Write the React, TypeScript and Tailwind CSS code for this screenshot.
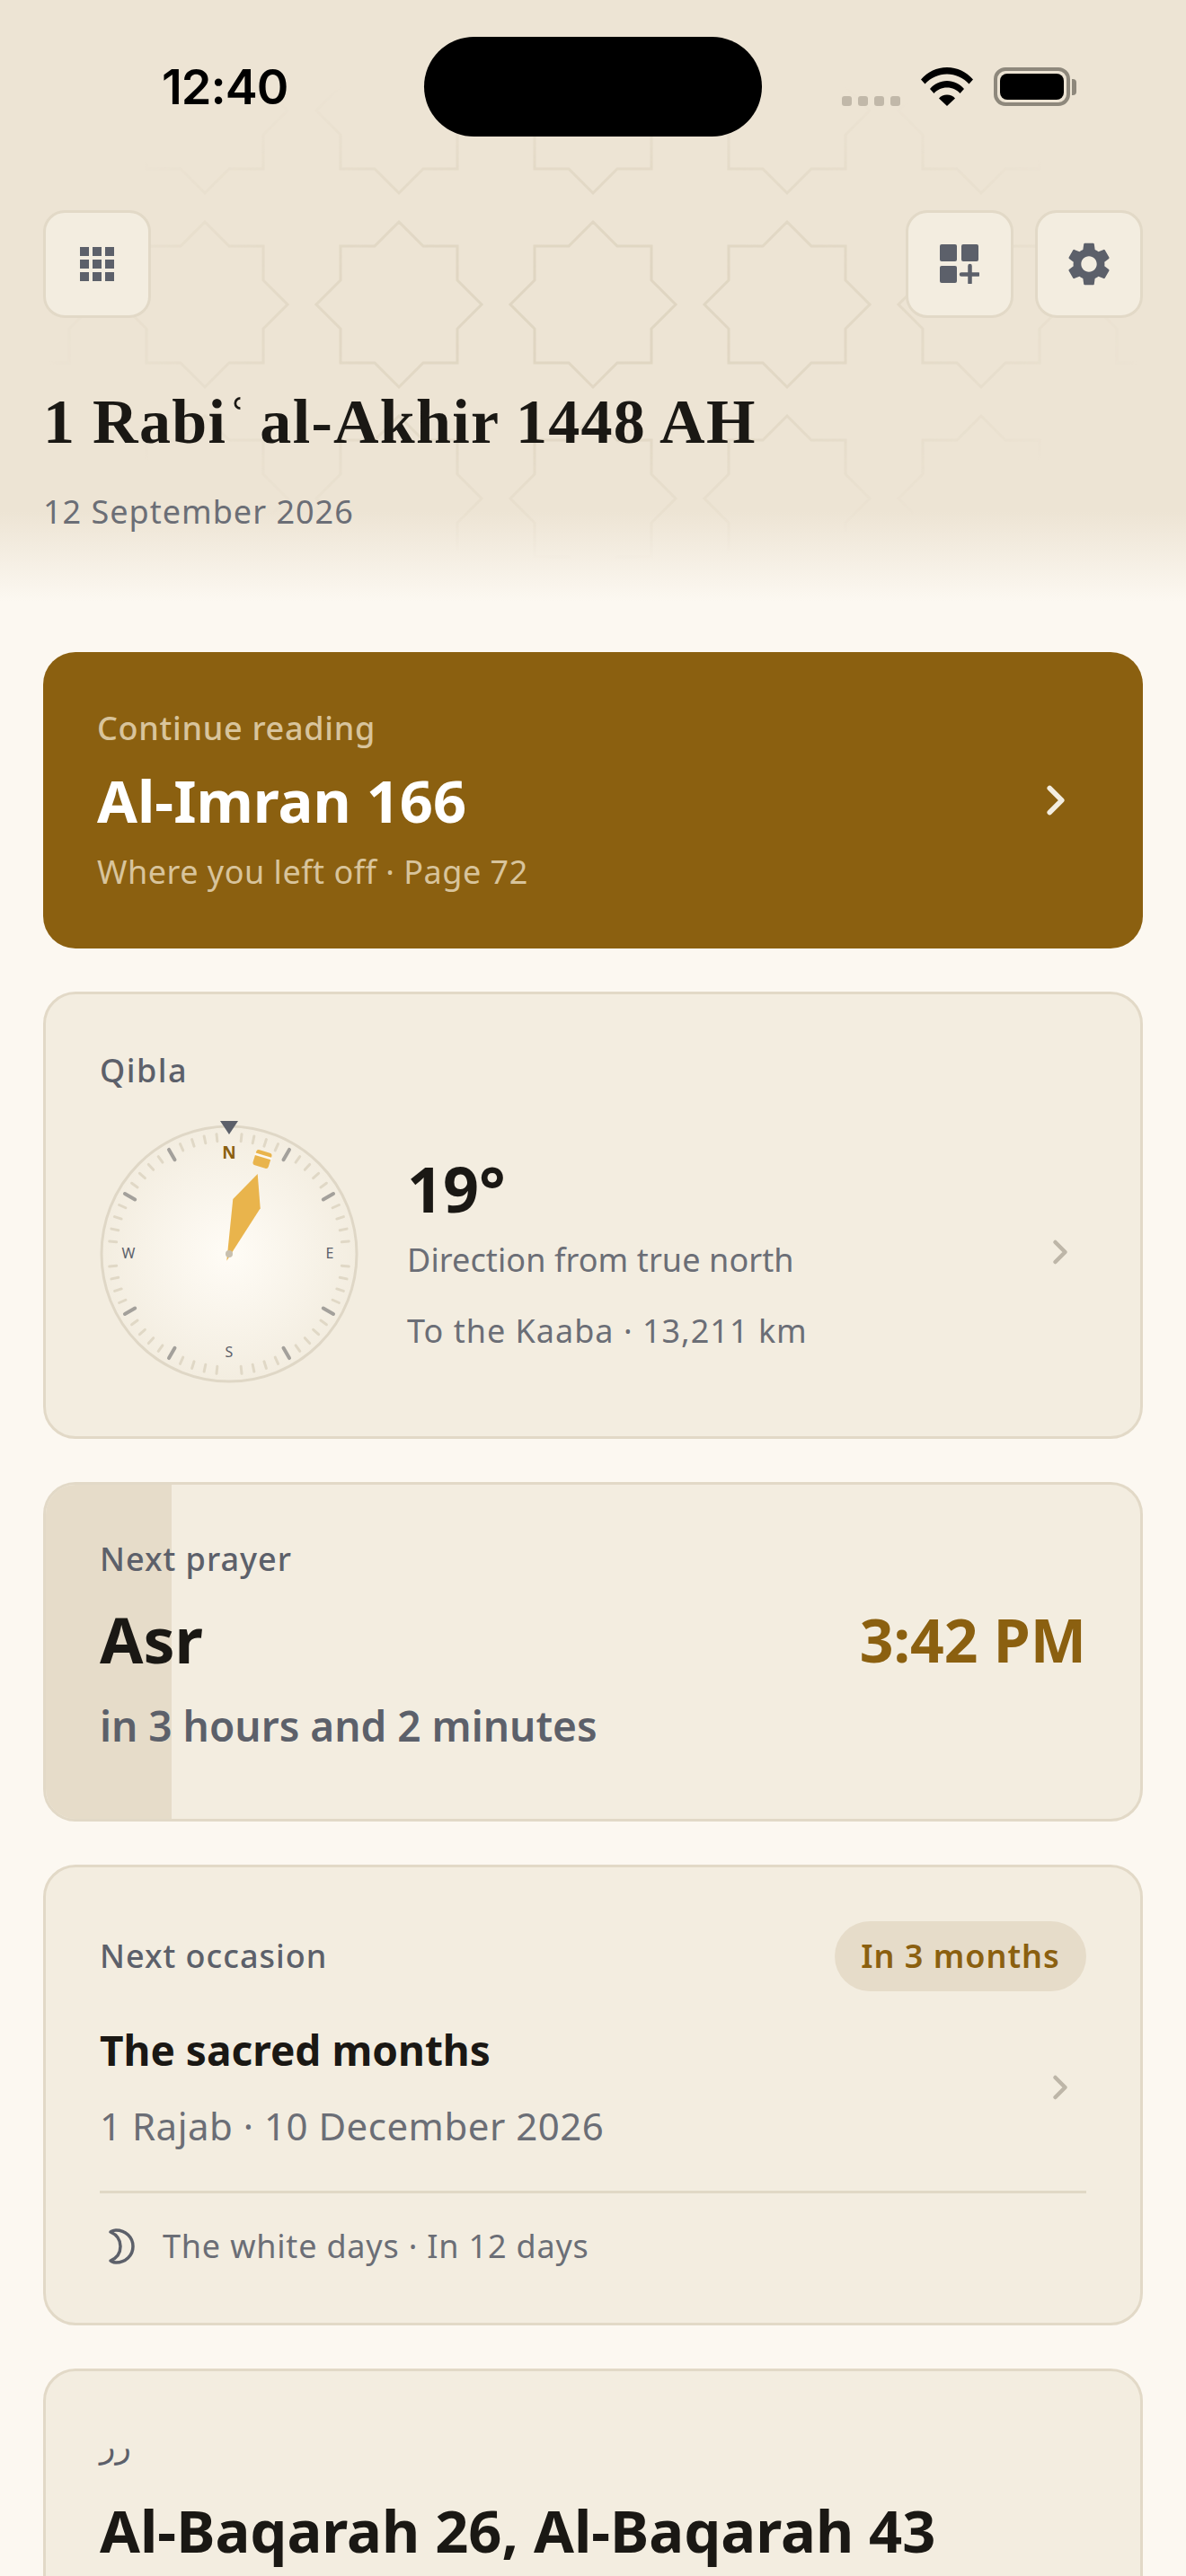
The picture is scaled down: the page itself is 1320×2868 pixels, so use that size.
import React from 'react';
import { ChevronRight } from 'lucide-react';
import { MdSettings } from 'react-icons/md';

const STAR_XS = [12, 228, 444, 660, 876, 1092, 1308];
const STAR_YS = [123, 339, 555];

const starPoints = (cx: number, cy: number) => {
  const r = 92;
  const s = 65;
  const n = 27;
  return [
    [0, -r], [n, -s], [s, -s], [s, -n], [r, 0], [s, n], [s, s], [n, s],
    [0, r], [-n, s], [-s, s], [-s, n], [-r, 0], [-s, -n], [-s, -s], [-n, -s],
  ].map(([x, y]) => `${cx + x},${cy + y}`).join(' ');
};

const HeaderPattern = () => (
  <svg className="absolute left-0 top-0" width="1320" height="670" viewBox="0 0 1320 670" fill="none">
    <defs>
      <radialGradient id="starFade" gradientUnits="userSpaceOnUse" cx="660" cy="345" r="620" gradientTransform="translate(0 190) scale(1 0.45)">
        <stop offset="0" stopColor="#fff" stopOpacity="1" />
        <stop offset="0.5" stopColor="#fff" stopOpacity="0.75" />
        <stop offset="1" stopColor="#fff" stopOpacity="0" />
      </radialGradient>
      <mask id="starMask">
        <rect width="1320" height="670" fill="url(#starFade)" />
      </mask>
    </defs>
    <g mask="url(#starMask)" stroke="#ded4c0" strokeWidth="3">
      {STAR_YS.map((y) =>
        STAR_XS.map((x) => <polygon key={`${x}-${y}`} points={starPoints(x, y)} />)
      )}
    </g>
  </svg>
);

const StatusBar = () => (
  <div className="relative flex h-[111px] items-center pl-[180px] pr-[122px]">
    <span className="w-[292px] pt-[1px] text-[54px] font-semibold leading-none tracking-[-1px] text-black [font-family:Inter,sans-serif]">12:40</span>
    <div className="h-[111px] w-[376px] rounded-[56px] bg-black" />
    <div className="ml-[89px] flex h-[111px] items-end gap-[7px] self-start pb-[34px] pt-[34px]">
      <span className="h-[11px] w-[11px] rounded-[3px] bg-[#c1b8a9]" />
      <span className="h-[11px] w-[11px] rounded-[3px] bg-[#c1b8a9]" />
      <span className="h-[11px] w-[11px] rounded-[3px] bg-[#c1b8a9]" />
      <span className="h-[11px] w-[11px] rounded-[3px] bg-[#c1b8a9]" />
    </div>
    <svg className="ml-[23px]" width="58" height="43" viewBox="0 0 58 43" fill="black">
      <path d="M0 13.500C7.500 5 17.500 0 29 0s21.500 5 29 13.500L53.500 18.500C47 11.500 38.500 7.500 29 7.500S11 11.500 4.500 18.500Z" />
      <path d="M10 24C14.500 18.500 21.500 15 29 15s14.500 3.500 19 9L43.500 29C40 25 35 22.500 29 22.500S18 25 14.500 29Z" />
      <path d="M20 34.500C22 32 25.500 30.500 29 30.500s7 1.500 9 4L29 43Z" />
    </svg>
    <div className="relative ml-[23px] h-[43px] w-[85px] rounded-[13px] border-[4px] border-[#8e887c] p-[3px]">
      <div className="h-full w-full rounded-[8px] bg-black" />
      <div className="absolute -right-[11px] top-[9px] h-[18px] w-[5px] rounded-r-[4px] bg-[#8e887c]" />
    </div>
  </div>
);

const IconButton = ({ children }: { children: React.ReactNode }) => (
  <button className="flex h-[120px] w-[120px] items-center justify-center rounded-[24px] border-[3px] border-[#e2d9c7] bg-[#f3ede0]">
    {children}
  </button>
);

const Header = () => (
  <div className="relative h-[670px] bg-[linear-gradient(to_bottom,#ede4d4_0%,#ede4d4_85%,#fcf8f1_100%)]">
    <HeaderPattern />
    <div className="relative pt-[41px]">
      <StatusBar />
      <div className="mt-[82px] flex items-center justify-between px-[48px]">
        <IconButton>
          <div className="grid grid-cols-3 gap-[4px]">
            {Array.from({ length: 9 }).map((_, i) => (
              <span key={i} className="h-[10px] w-[10px] bg-[#5c606a]" />
            ))}
          </div>
        </IconButton>
        <div className="flex gap-[24px]">
          <IconButton>
            <svg width="44" height="44" viewBox="0 0 44 44" fill="#5c606a">
              <rect x="0" y="0" width="19" height="19" rx="2" />
              <rect x="24" y="0" width="19" height="19" rx="2" />
              <rect x="0" y="24" width="19" height="19" rx="2" />
              <path d="M33.500 24v19M24 33.500h19" stroke="#5c606a" strokeWidth="4.500" strokeLinecap="round" />
            </svg>
          </IconButton>
          <IconButton>
            <MdSettings size={58} color="#5c606a" />
          </IconButton>
        </div>
      </div>
      <h1 className="mt-[76px] px-[48px] text-[70px] font-bold leading-[80px] tracking-[1.300px] text-[#1a1814] [font-family:'Liberation_Serif',serif]">
        1 Rabi<span className="tracking-[-5px]">ʿ</span> al-Akhir 1448 AH
      </h1>
      <p className="mt-[37px] px-[48px] text-[36px] leading-[46px] tracking-[1px] text-[#6b6e76]">
        12 September 2026
      </p>
    </div>
  </div>
);

const Card = ({ children, className = '' }: { children: React.ReactNode; className?: string }) => (
  <div className={`relative overflow-hidden rounded-[36px] border-[3px] border-[#e2d9c7] bg-[#f3ede0] ${className}`}>
    {children}
  </div>
);

const Compass = () => {
  const ticks = Array.from({ length: 60 }, (_, i) => i * 6).filter((a) => a % 90 !== 0);
  return (
    <svg width="296" height="310" viewBox="-148 -152 296 310" className="shrink-0">
      <defs>
        <radialGradient id="dial">
          <stop offset="0" stopColor="#fffcf6" />
          <stop offset="1" stopColor="#f3ede0" />
        </radialGradient>
      </defs>
      <circle r="142" fill="url(#dial)" stroke="#dfd7c6" strokeWidth="3" />
      {ticks.map((a) => {
        const major = a % 30 === 0;
        return (
          <line
            key={a}
            x1="0"
            x2="0"
            y1={major ? -121 : -126}
            y2="-134"
            transform={`rotate(${a})`}
            stroke={major ? '#a3a09b' : '#e0d8c6'}
            strokeWidth={major ? 4 : 3}
            strokeLinecap="round"
          />
        );
      })}
      <polygon points="-10,-148 10,-148 0,-133" fill="#5c606a" />
      <text x="0" y="-106" textAnchor="middle" fontSize="19" fontWeight="700" fill="#8b6010" fontFamily="Noto Sans, sans-serif">N</text>
      <text x="112" y="5" textAnchor="middle" fontSize="16" fill="#5c606a" fontFamily="Noto Sans, sans-serif">E</text>
      <text x="-112" y="5" textAnchor="middle" fontSize="16" fill="#5c606a" fontFamily="Noto Sans, sans-serif">W</text>
      <text x="0" y="115" textAnchor="middle" fontSize="16" fill="#5c606a" fontFamily="Noto Sans, sans-serif">S</text>
      <polygon points="31.700,-89 34.700,-50.700 -2.700,7.700 4.300,-61" fill="#e9b44c" />
      <circle r="4" fill="#c8bfae" />
      <g transform="translate(37 -105.500) rotate(17)">
        <rect x="-9" y="-9" width="18" height="18" rx="3" fill="#e9b44c" />
        <rect x="-10" y="-4.500" width="20" height="2.500" fill="#fcf8f1" />
      </g>
    </svg>
  );
};

export default function App() {
  return (
    <div className="h-[2868px] w-[1320px] overflow-hidden bg-[#fcf8f1] [font-family:'Noto_Sans',sans-serif]">
      <Header />
      <div className="flex flex-col gap-[48px] px-[48px] pt-[56px]">
        {/* Continue reading */}
        <div className="flex h-[330px] items-center justify-between rounded-[36px] bg-[#8b6010] pl-[60px] pr-[70px]">
          <div>
            <div className="text-[36px] font-medium leading-[46px] tracking-[0.700px] text-[#d8c49c]">Continue reading</div>
            <div className="mt-[17px] text-[65px] font-bold leading-[80px] text-white">Al-Imran 166</div>
            <div className="mt-[17px] text-[36px] leading-[46px] tracking-[0.500px] text-[#d8c49c]">Where you left off · Page 72</div>
          </div>
          <ChevronRight size={54} strokeWidth={2.500} color="#f3ede0" />
        </div>

        {/* Qibla */}
        <Card className="h-[498px] pl-[60px] pr-[67px] pt-[62px]">
          <div className="text-[36px] font-medium leading-[46px] tracking-[1.500px] text-[#5c606a]">Qibla</div>
          <div className="mt-[29px] flex items-start">
            <div className="-ml-[4px]">
              <Compass />
            </div>
            <div className="ml-[50px] flex-1 pt-[39px]">
              <div className="text-[70px] font-bold leading-[80px] text-[#1a1814]">19°</div>
              <div className="mt-[17px] text-[36px] leading-[46px] tracking-[0.100px] text-[#6b6e76]">Direction from true north</div>
              <div className="mt-[33px] text-[36px] leading-[46px] tracking-[1px] text-[#6b6e76]">To the Kaaba · 13,211 km</div>
            </div>
            <div className="mt-[128px]">
              <ChevronRight size={44} strokeWidth={2.500} color="#bdb6a8" />
            </div>
          </div>
        </Card>

        {/* Next prayer */}
        <Card className="h-[378px] px-[60px] pt-[60px]">
          <div className="absolute bottom-0 left-0 top-0 w-[140px] bg-[#e6dcc9]" />
          <div className="relative">
            <div className="text-[36px] font-medium leading-[46px] tracking-[1px] text-[#5c606a]">Next prayer</div>
            <div className="mt-[23px] flex items-center justify-between">
              <span className="text-[70px] font-bold leading-[86px] text-[#1a1814]">Asr</span>
              <span className="text-[66px] font-bold leading-[86px] text-[#8b6010]">3:42 PM</span>
            </div>
            <div className="mt-[23px] text-[46px] font-semibold leading-[60px] text-[#5c606a]">in 3 hours and 2 minutes</div>
          </div>
        </Card>

        {/* Next occasion */}
        <Card className="h-[513px] px-[60px] pt-[60px]">
          <div className="flex items-center justify-between">
            <span className="text-[36px] font-medium leading-[46px] tracking-[1px] text-[#5c606a]">Next occasion</span>
            <span className="flex h-[78px] w-[280px] items-center justify-center rounded-full bg-[#e6dcc9] text-[36px] font-semibold tracking-[1px] text-[#8b6010]">In 3 months</span>
          </div>
          <div className="mt-[35px] flex items-center justify-between pr-[7px]">
            <div>
              <div className="text-[46px] font-bold leading-[60px] text-[#1a1814]">The sacred months</div>
              <div className="mt-[27px] text-[42px] leading-[56px] tracking-[0.500px] text-[#6b6e76]">1 Rajab · 10 December 2026</div>
            </div>
            <ChevronRight size={44} strokeWidth={2.500} color="#bdb6a8" />
          </div>
          <div className="mt-[44px] h-[3px] bg-[#e0d8c6]" />
          <div className="ml-[9px] mt-[36px] flex items-center gap-[29px]">
            <svg width="32" height="40" viewBox="0 0 32 40" fill="none" stroke="#5c606a" strokeWidth="3.500" strokeLinejoin="round">
              <path d="M9 2C20 2 28 10 28 20S20 38 9 38C6 38 5 37 3 36C10 33 14 27 14 20S10 7 3 4C5 3 6 2 9 2Z" />
            </svg>
            <span className="text-[36px] leading-[46px] tracking-[0.800px] text-[#6b6e76]">The white days · In 12 days</span>
          </div>
        </Card>

        {/* Ayah */}
        <Card className="h-[400px] px-[60px] pt-[52px]">
          <div className="h-[82px] text-[36px] leading-[64px] text-[#5c606a] [font-family:'DejaVu_Sans',sans-serif]">رر</div>
          <div className="whitespace-nowrap text-[65px] font-bold leading-[86px] text-[#1a1814]">Al-Baqarah 26, Al-Baqarah 43</div>
        </Card>
      </div>
    </div>
  );
}
